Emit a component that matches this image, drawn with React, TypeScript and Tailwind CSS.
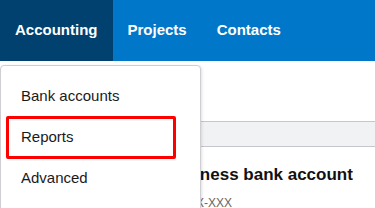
import React from 'react'

const tabs = [
  { label: 'Accounting', active: true },
  { label: 'Projects', active: false },
  { label: 'Contacts', active: false },
]

const menuItems = ['Bank accounts', 'Reports', 'Advanced']

const App: React.FC = () => {
  return (
    <div className='relative w-[375px] h-[208px] overflow-hidden bg-white font-["Liberation_Sans",Arial,sans-serif]'>
      <nav className='flex h-[61px] bg-[#0077c8]'>
        {tabs.map((tab) => (
          <div
            key={tab.label}
            className={`flex items-center px-[15px] text-[15px] font-bold text-white ${tab.active ? 'bg-[#00416f]' : ''}`}
          >
            {tab.label}
          </div>
        ))}
      </nav>

      <div className='mt-[60px] h-[26px] border-y border-[#c6c7cc] bg-[#f1f2f4]' />
      <h2 className='mt-[18px] pl-[163px] text-[17px] leading-[20px] font-bold text-[#111]'>
        Business bank account
      </h2>
      <p className='mt-[10px] pl-[172px] text-[12px] leading-[16px] text-[#666]'>XXXX-XXX</p>

      <div className='absolute left-0 top-[65px] w-[201px] h-[160px] rounded-[4px] border border-[#cfcfd3] bg-white pt-[10px] shadow-[1px_1px_3px_rgba(0,0,0,0.12)]'>
        {menuItems.map((item) => (
          <div key={item} className='flex h-[41px] items-center px-5 text-[15px] text-[#1a1a1a]'>
            {item}
          </div>
        ))}
      </div>

      <div className='absolute left-[6px] top-[116px] w-[170px] h-[43px] rounded-[2px] border-[3px] border-[#ff0000]' />
    </div>
  )
}

export default App
